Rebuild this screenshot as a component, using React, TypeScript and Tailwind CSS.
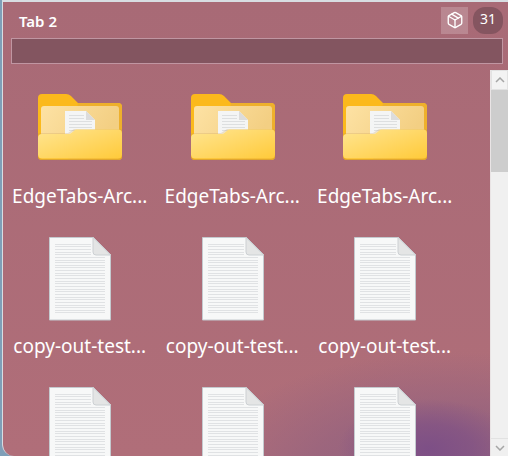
import { Package } from 'lucide-react';

const ROWS = [
  { kind: 'folder', label: 'EdgeTabs-Arc...' },
  { kind: 'file', label: 'copy-out-test...' },
  { kind: 'file', label: '' },
];

function FolderIcon() {
  return (
    <svg width="84" height="66" viewBox="0 0 84 66" fill="none">
      <defs>
        <linearGradient id="inner" x1="0" y1="0" x2="1" y2="0.3">
          <stop offset="0" stopColor="#fde2a4" />
          <stop offset="1" stopColor="#f3cf83" />
        </linearGradient>
        <linearGradient id="front" x1="0" y1="0" x2="1" y2="1">
          <stop offset="0" stopColor="#ffe591" />
          <stop offset="1" stopColor="#ffca3a" />
        </linearGradient>
      </defs>
      <path
        d="M0 4a4 4 0 0 1 4-4h24c2 0 3.500 .8 5 2l7 7h40a4 4 0 0 1 4 4v49a4 4 0 0 1-4 4H4a4 4 0 0 1-4-4z"
        fill="#fbb91c"
      />
      <path d="M40 9h40a4 4 0 0 1 4 4v49a4 4 0 0 1-4 4H30z" fill="#eeb02c" />
      <rect x="3" y="12" width="78" height="34" rx="3" fill="url(#inner)" />
      <path d="M27 17h21l9 9v18H27z" fill="#f4f5f5" />
      <path d="M48 17l9 9h-9z" fill="#dcdcdc" />
      <path
        d="M31 21.500h15M31 24.500h15M31 27.500h23M31 30.500h23M31 33.500h23M31 36.500h23"
        stroke="#dddfe0"
        strokeWidth="1"
      />
      <path d="M0 39h30l6-4h48v2H36l-6 4H0z" fill="#c79a4e" opacity="0.25" />
      <path
        d="M4 40h26c1.500 0 2.500-.5 3.500-1.300l2.500-2c1-.8 2-1.200 3.500-1.200H80a4 4 0 0 1 4 4v21a4 4 0 0 1-4 4H4a4 4 0 0 1-4-4V44a4 4 0 0 1 4-4z"
        fill="url(#front)"
      />
      <path d="M0 61a4 4 0 0 0 4 4h76a4 4 0 0 0 4-4v1a4 4 0 0 1-4 4H4a4 4 0 0 1-4-4z" fill="#e0a52e" />
    </svg>
  );
}

function FileIcon() {
  const lines = [7, 9, 12, 15, 17, 20, 23, 25, 28, 30, 33, 36, 38, 41, 44, 46, 49, 52, 54, 57, 60, 62, 65, 68, 70, 73, 75];
  return (
    <svg width="62" height="84" viewBox="0 0 62 84" fill="none" className="shrink-0">
      <path d="M.5 .5h44l17 17v65.500H.5z" fill="#f7f8f8" stroke="#c4cacf" />
      {lines.map((y) => (
        <path key={y} d={`M6 ${y + 0.5}H${y < 18 ? 42 : 56}`} stroke="#e0e2e4" />
      ))}
      <path d="M44 .5l17.500 17.500H47a3 3 0 0 1-3-3z" fill="#e4e5e5" stroke="#ccd0d3" />
    </svg>
  );
}

function Tile({ kind, label }: { kind: string; label: string }) {
  return (
    <div className="flex h-[150px] flex-col items-center">
      <div className="flex h-[114px] shrink-0 items-start">
        {kind === 'folder' ? (
          <div className="mt-[24px]">
            <FolderIcon />
          </div>
        ) : (
          <div className="mt-[17px]">
            <FileIcon />
          </div>
        )}
      </div>
      {label && <span className="mr-[1px] text-[19px] leading-[24px] whitespace-nowrap text-white">{label}</span>}
    </div>
  );
}

function Scrollbar() {
  return (
    <div className="flex w-[18px] shrink-0 flex-col border-l border-[#e9e4e5] bg-[#f0f0f0]">
      <div className="flex h-[20px] items-center justify-center border border-[#e2e2e2] bg-[#f3f3f3]">
        <svg width="10" height="6" viewBox="0 0 10 6" fill="none" stroke="#a6a6a6" strokeWidth="1.500">
          <path d="M1 5l4-4 4 4" />
        </svg>
      </div>
      <div className="h-[82px] bg-[#cdcdcd]" />
      <div className="flex-1" />
      <div className="flex h-[18px] items-center justify-center border-t border-[#e2e2e2]">
        <svg width="10" height="6" viewBox="0 0 10 6" fill="none" stroke="#a6a6a6" strokeWidth="1.500">
          <path d="M1 1l4 4 4-4" />
        </svg>
      </div>
    </div>
  );
}

export default function App() {
  return (
    <div className="h-[456px] w-[508px] overflow-hidden bg-[#7f9fb8] font-['Noto_Sans','Open_Sans',sans-serif]">
      <div className="ml-[2px] flex h-full flex-col rounded-bl-[12px] border-t-2 border-l border-[#d8dde2] bg-[#ad6c78] bg-[radial-gradient(ellipse_90px_50px_at_425px_447px,#7d4f86_0%,rgba(125,79,134,0.65)_50%,rgba(125,79,134,0)_100%),radial-gradient(ellipse_260px_125px_at_450px_475px,#8f6080_0%,rgba(143,96,128,0.6)_55%,rgba(173,108,120,0)_100%),linear-gradient(180deg,#a86a76_0%,#b06e79_100%)]">
        <div className="flex h-[33px] shrink-0 items-center pt-[3px] pr-[5px] pl-[16px]">
          <span className="mt-[2px] flex-1 text-[15px] font-semibold text-white">Tab 2</span>
          <div className="flex h-[27px] w-[27px] items-center justify-center bg-white/20">
            <Package size={18} strokeWidth={1.800} className="text-white" />
          </div>
          <div className="ml-[5px] flex h-[27px] w-[30px] items-center justify-center rounded-[12px] bg-[#855560] pb-[3px] text-[14px] text-white">
            31
          </div>
        </div>
        <div className="mx-[8px] mt-[3px] mr-[5px] h-[26px] shrink-0 border border-[#c096a2] bg-[#835560]" />
        <div className="mt-[6px] flex min-h-0 flex-1">
          <div className="min-w-0 flex-1 overflow-hidden pl-[1px]">
            <div className="grid grid-cols-[repeat(3,152.500px)]">
              {ROWS.map((row, r) =>
                [0, 1, 2].map((c) => <Tile key={`${r}-${c}`} kind={row.kind} label={row.label} />),
              )}
            </div>
          </div>
          <Scrollbar />
        </div>
      </div>
    </div>
  );
}
